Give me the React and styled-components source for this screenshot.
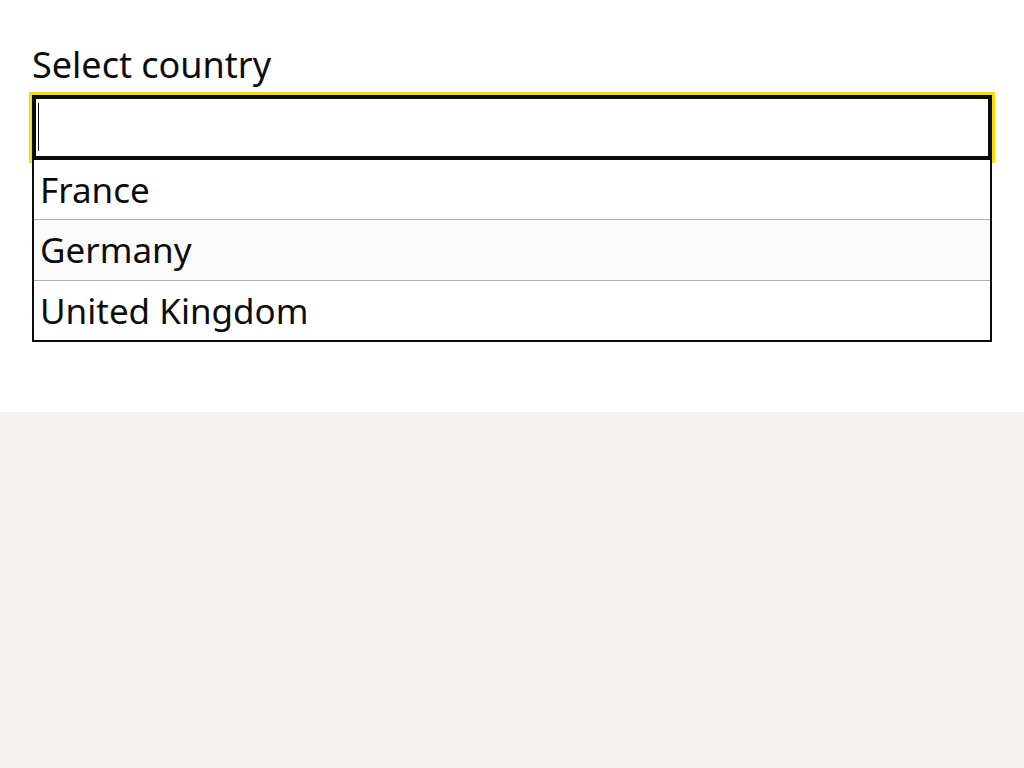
import React from "react";
import styled, { createGlobalStyle } from "styled-components";

const Global = createGlobalStyle`
  html, body {
    margin: 0;
    padding: 0;
    background: #f3f2f1;
  }
  body {
    font-family: "Noto Sans", "Open Sans", sans-serif;
    color: #0b0c0c;
  }
`;

const Main = styled.main`
  background: #ffffff;
  height: 412px;
  box-sizing: border-box;
  padding: 42px 32px 0 32px;
`;

const Label = styled.label`
  display: block;
  font-size: 36px;
  line-height: 46px;
  margin-bottom: 7px;
  color: #0b0c0c;
`;

const Wrapper = styled.div`
  position: relative;
  width: 960px;
`;

const Input = styled.input`
  display: block;
  box-sizing: border-box;
  width: 100%;
  height: 65px;
  margin: 0;
  padding: 0 4px;
  border: 2px solid #0b0c0c;
  border-radius: 0;
  box-shadow: inset 0 0 0 2px #0b0c0c;
  outline: 3px solid #ffdd00;
  outline-offset: 0;
  font-family: "Noto Sans", "Open Sans", sans-serif;
  font-size: 35px;
  color: #0b0c0c;
  background: #ffffff;
  caret-color: transparent;
  &:focus {
    outline: 3px solid #ffdd00;
  }
`;

const Caret = styled.span`
  position: absolute;
  left: 6px;
  top: 8px;
  width: 1px;
  height: 48px;
  background: #0b0c0c;
  pointer-events: none;
`;

const Menu = styled.ul`
  position: relative;
  z-index: 1;
  list-style: none;
  margin: 0;
  padding: 0;
  background: #ffffff;
  border: 2px solid #0b0c0c;
  border-top: 0;
`;

const Option = styled.li`
  box-sizing: border-box;
  height: ${(p) => p.$h}px;
  padding: 0 6px;
  display: flex;
  align-items: center;
  font-size: 35px;
  line-height: 46px;
  color: #0b0c0c;
  background: ${(p) => (p.$odd ? "#fafafa" : "#ffffff")};
  border-bottom: ${(p) => (p.$last ? "0" : "1px solid #b1b4b6")};
`;

const options = [
  { name: "France", h: 60 },
  { name: "Germany", h: 61 },
  { name: "United Kingdom", h: 59 },
];

export default function App() {
  return (
    <>
      <Global />
      <Main>
        <Label htmlFor="country">Select country</Label>
        <Wrapper>
          <Input id="country" type="text" autoFocus autoComplete="off" />
          <Caret aria-hidden="true" />
          <Menu role="listbox">
            {options.map((o, i) => (
              <Option
                key={o.name}
                role="option"
                $h={o.h}
                $odd={i % 2 === 1}
                $last={i === options.length - 1}
              >
                {o.name}
              </Option>
            ))}
          </Menu>
        </Wrapper>
      </Main>
    </>
  );
}
